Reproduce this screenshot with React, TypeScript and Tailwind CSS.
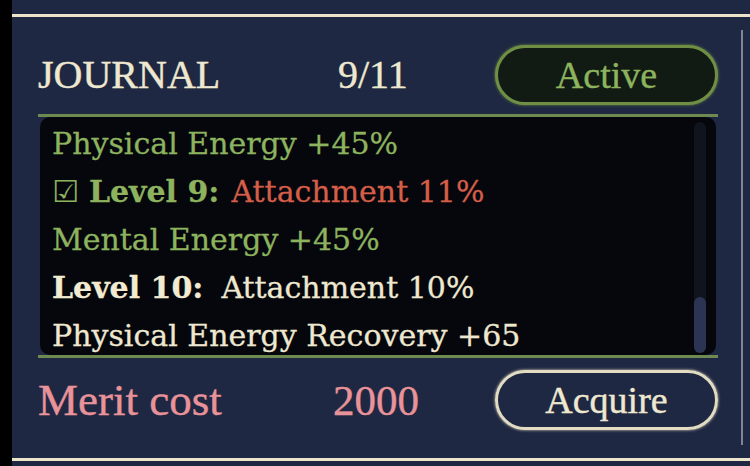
import React from 'react';

const serifHead = { fontFamily: '"Liberation Serif", serif' };
const serifBody = { fontFamily: '"DejaVu Serif", "Liberation Serif", serif' };

const Line: React.FC<{ children: React.ReactNode }> = ({ children }) => (
  <div className="h-[48px] flex items-center whitespace-nowrap">{children}</div>
);

const App: React.FC = () => {
  return (
    <div className="w-[750px] h-[466px] bg-black flex overflow-hidden">
      <div className="w-[12px] shrink-0 bg-black" />
      <div className="flex-1 flex flex-col bg-[#1f2842] pt-[14px]">
        <div className="h-[3px] bg-[#ece5c9]" />
        <div className="flex flex-1">
          {/* main card content */}
          <div className="flex-1 flex flex-col pl-[26px] pr-[23px] pt-[28px]">
            <div className="h-[60px] flex items-center [-webkit-text-stroke:0.4px_currentColor]" style={serifHead}>
              <div className="w-[300px] text-[40px] leading-none text-[#efe8d0]">JOURNAL</div>
              <div className="w-[157px] text-[40px] leading-none text-[#efe8d0]">9/11</div>
              <div className="flex-1 h-full rounded-full border-[3px] border-[#6f8f45] bg-[#111b13] flex items-center justify-center text-[38px] leading-none text-[#8db35e] shadow-[0_0_3px_#6f8f45]">
                Active
              </div>
            </div>

            <div className="mt-[9px] h-[244px] border-y-[3px] border-[#6e8a50] px-[2px]">
              <div className="h-full bg-[#05070d] rounded-[10px] flex pl-[12px] pr-[10px] pt-[3px]" style={serifBody}>
                <div className="flex-1 text-[30px] leading-none [-webkit-text-stroke:0.3px_currentColor]">
                  <Line>
                    <span className="text-[#8db35e]">Physical Energy +45%</span>
                  </Line>
                  <Line>
                    <span className="text-[#8db35e] text-[30px] mr-[10px] [-webkit-text-stroke:0px]" style={{ fontFamily: '"DejaVu Sans", sans-serif' }}>☑</span>
                    <span className="text-[#8db35e] font-bold mr-[12px]">Level 9:</span>
                    <span className="text-[#d55e48]">Attachment 11%</span>
                  </Line>
                  <Line>
                    <span className="text-[#8db35e]">Mental Energy +45%</span>
                  </Line>
                  <Line>
                    <span className="text-[#f2ebd2] font-bold mr-[18px]">Level 10:</span>
                    <span className="text-[#efe8d0]">Attachment 10%</span>
                  </Line>
                  <Line>
                    <span className="text-[#efe8d0]">Physical Energy Recovery +65</span>
                  </Line>
                </div>
                <div className="w-[12px] my-[2px] bg-[#10141c] rounded-full flex flex-col justify-end">
                  <div className="h-[56px] rounded-full bg-[#2c3454]" />
                </div>
              </div>
            </div>

            <div className="mt-[12px] h-[60px] flex items-center [-webkit-text-stroke:0.4px_currentColor]" style={serifHead}>
              <div className="w-[295px] text-[45px] leading-none text-[#e8939a]">Merit cost</div>
              <div className="w-[162px] text-[43px] leading-none text-[#e8939a]">2000</div>
              <div className="flex-1 h-full rounded-full border-[3px] border-[#e2dcc2] flex items-center justify-center text-[38px] leading-none text-[#efe8d0] shadow-[0_0_3px_#e2dcc2]">
                Acquire
              </div>
            </div>
          </div>

          {/* right rule */}
          <div className="w-[9px] shrink-0 pt-[13px] pb-[13px] flex">
            <div className="w-[2px] bg-[#7d8597]" />
          </div>
        </div>
        <div className="h-[3px] bg-[#ece5c9] mb-[5px]" />
      </div>
    </div>
  );
};

export default App;
